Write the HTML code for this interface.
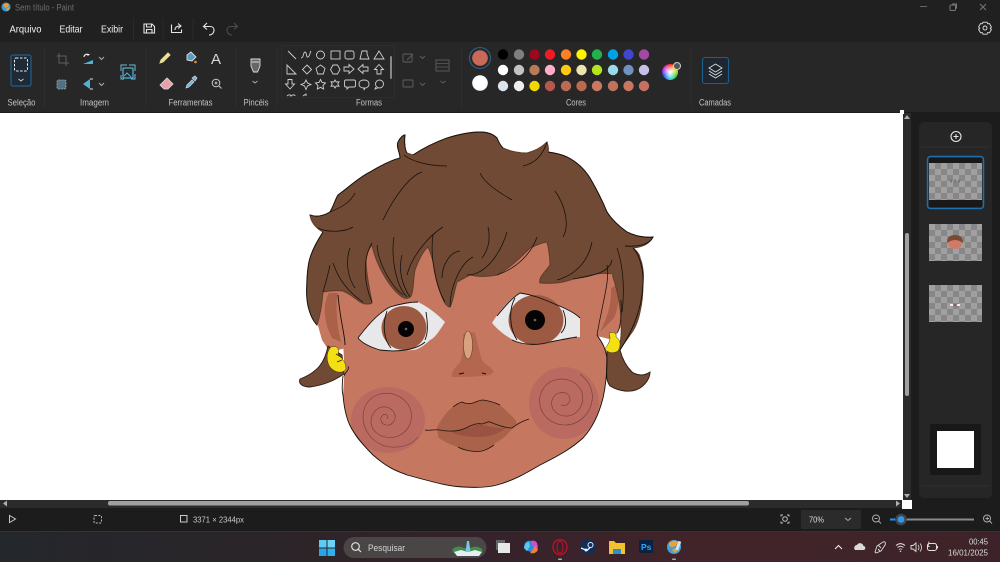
<!DOCTYPE html>
<html lang="pt"><head><meta charset="utf-8"><title>Sem título - Paint</title>
<style>
html,body{margin:0;padding:0;background:#202020}
body{width:1000px;height:562px;overflow:hidden;position:relative;font-family:"Liberation Sans",sans-serif}
svg{position:absolute;left:0;top:0;filter:blur(.3px)}
.chk{position:absolute;background:repeating-conic-gradient(#878787 0 25%,#a0a0a0 0 50%) 0 0/12px 12px}
</style></head><body>
<div style="position:absolute;left:0;top:0;width:1000px;height:42px;background:#202020"></div>
<div style="position:absolute;left:0;top:42px;width:1000px;height:70px;background:#272727"></div>
<div style="position:absolute;left:0;top:112px;width:1000px;height:397px;background:#1c1c1c"></div>
<div style="position:absolute;left:0;top:113px;width:904px;height:387px;background:#fff"></div>
<div style="position:absolute;left:0;top:509px;width:1000px;height:23px;background:#1c1c1c"></div>
<div style="position:absolute;left:0;top:532px;width:1000px;height:30px;background:linear-gradient(90deg,#24272c 0,#2a2528 25%,#33222a 45%,#41242a 70%,#3d2329 100%)"></div>
<div style="position:absolute;left:919px;top:122px;width:73px;height:376px;background:#262626;border-radius:5px"></div>
<div class="chk" style="left:929px;top:163px;width:53px;height:37px"></div>
<div class="chk" style="left:929px;top:224px;width:53px;height:37px"></div>
<div class="chk" style="left:929px;top:285px;width:53px;height:37px"></div>

<svg width="1000" height="562" viewBox="0 0 1000 562" font-family="Liberation Sans, sans-serif">
<!-- side panel -->
<circle cx="956" cy="136.500" r="5" fill="none" stroke="#e8e8e8" stroke-width="1.100"/>
<path d="M953.500 136.500h5M956 134v5" stroke="#e8e8e8"/>
<path d="M921 147h69M921 486h69" stroke="#303030"/>
<rect x="927.500" y="156.500" width="56" height="52" rx="3" fill="none" stroke="#1f6fb0" stroke-width="1.500"/>
<rect x="929" y="158" width="53" height="5" fill="#181818"/><rect x="929" y="200" width="53" height="7" fill="#1a1818"/>
<rect x="930" y="424" width="51" height="51" rx="2" fill="#181818"/><rect x="937" y="431" width="37" height="37" fill="#fff"/>
<path d="M950 181h12" stroke="#777" stroke-width="3" stroke-dasharray="2 2"/>
<ellipse cx="955" cy="243" rx="7" ry="6" fill="#d27a68"/><path d="M947 243q0-8 8-8t8 8q-4-3-8-3t-8 3z" fill="#7a4a33"/>
<rect x="950" y="304" width="3" height="2" fill="#eee"/><rect x="957" y="304" width="3" height="2" fill="#eee"/><rect x="954" y="304" width="2" height="2" fill="#a5563f"/>

<!-- scrollbars -->
<rect x="903" y="113" width="8" height="387" fill="#2b2b2b"/>
<rect x="905" y="233" width="4" height="163" fill="#a0a0a0" rx="2"/>
<path d="M907 115l3 4h-6zM907 498l3-4h-6z" fill="#b0b0b0"/>
<rect x="0" y="500" width="904" height="8" fill="#2b2b2b"/>
<rect x="108" y="501" width="641" height="4.500" fill="#a0a0a0" rx="2"/>
<path d="M3 503.500l4-3v6zM900 503.500l-4-3v6z" fill="#b0b0b0"/>
<rect x="902" y="500" width="10" height="9" fill="#fff"/><rect x="900" y="110" width="4" height="4" fill="#fff"/>

<!-- DRAWING: skin -->
<path d="M338 270C340 340 347 345 343 395C345 420 350 432 373 455C390 470 400 472 407 475C430 481 445 486 463 487C480 488 490 487 497 485C515 480 528 472 540 465C560 455 572 448 583 438C595 425 600 410 603 398C606 385 607 372 607 358C605 345 600 340 597 335L612 260L480 190L350 240Z" fill="#c6775f"/>
<!-- ears -->
<path d="M323 290L340 290L346 348L330 352L322 340L317 322Z" fill="#c6775f"/>
<path d="M608 272L622 285L622 325L613 340L597 336Z" fill="#c6775f"/>
<path d="M329 293C322 305 324 322 332 338L341 342C337 325 335 305 338 293ZM611 288C612 305 606 320 600 332L614 318C618 310 620 295 617 285Z" fill="#ab6049"/>
<!-- lower hair locks -->
<path d="M328 346C325 362 318 372 300 379C298 384 303 387 310 387C325 385 335 380 344 374L342 355Z" fill="#704a34" stroke="#2a1b13" stroke-width=".9"/>
<path d="M607 350C607 370 605 380 610 386C620 392 632 393 640 388C646 384 650 378 650 372C644 376 638 376 632 372C626 366 622 358 620 350Z" fill="#704a34" stroke="#2a1b13" stroke-width=".9"/>
<!-- cheeks -->
<ellipse cx="388" cy="420" rx="37" ry="33" fill="#ba6a60"/>
<ellipse cx="564" cy="403" rx="35" ry="36" fill="#ba6a60"/>
<g fill="none" stroke="#703c35" stroke-width=".6">
<path d="M387 419c3-3-2-6-4-4-4 3-2 9 3 10 6 1 10-5 9-10-2-7-10-10-16-7-8 4-10 14-6 21 5 8 18 11 27 6 10-5 14-17 10-27-5-11-18-17-30-14-11 3-17 12-17 23 0 13 9 25 22 29 13 3 26 0 33-9"/>
<path d="M561 405c5 2 9-2 9-6 0-5-6-8-11-6-7 2-9 10-6 16 4 7 14 9 21 5 8-5 11-15 7-24-5-9-16-13-26-10-11 3-17 14-15 25 2 12 13 20 25 20 14 0 25-11 27-24 2-11-4-21-12-27"/>
</g>
<!-- face outline -->
<path d="M338 295C340 320 345 335 345 345M343 376C342 385 342 392 343 395C345 420 350 432 373 455C390 470 400 472 407 475C430 481 445 486 463 487C480 488 490 487 497 485C515 480 528 472 540 465C560 455 572 448 583 438C595 425 600 410 603 398C606 385 607 372 607 358C605 345 600 340 597 335" fill="none" stroke="#15100d" stroke-width=".9"/>
<!-- eyes -->
<path d="M358 338C370 322 380 312 390 307C400 304 410 302 418 302C430 308 438 315 445 322C440 330 435 338 430 340C425 345 418 350 413 350C400 351 390 351 380 350C370 347 362 343 358 338Z" fill="#e8e8ea"/>
<ellipse cx="404" cy="328" rx="22.500" ry="22" fill="#9d5a42"/>
<circle cx="406" cy="329" r="8" fill="#050303"/><circle cx="406" cy="329" r="1.300" fill="#666"/>
<path d="M358 338C370 322 380 312 390 307C400 304 410 302 418 302M358 338C362 343 370 347 380 350C395 352 415 351 425 342M387 311C382 325 384 340 391 348M426 312C428 325 428 333 425 340" fill="none" stroke="#15100d" stroke-width=".9"/>
<path d="M492 323C500 310 510 298 520 293C535 295 545 300 557 305C567 309 575 313 580 318L580 337C570 338 560 340 543 344C530 345 520 343 517 342C505 336 498 330 492 323Z" fill="#e8e8ea"/>
<ellipse cx="536" cy="320" rx="27.500" ry="25" fill="#9d5a42"/>
<circle cx="535" cy="320" r="10" fill="#050303"/><circle cx="535" cy="320" r="1.300" fill="#666"/>
<path d="M497 316C505 306 512 298 520 293C535 295 545 300 557 305C567 309 575 313 580 318M512 340C525 346 540 345 550 342C560 340 570 338 577 337M515 298C508 310 510 330 517 340M563 310C567 320 566 328 561 333" fill="none" stroke="#15100d" stroke-width=".9"/>
<!-- nose -->
<path d="M463 335C465 332 472 331 475 333C478 345 480 355 483 362C488 366 492 368 494 372L490 375C478 377 462 377 452 377C451 372 456 366 460 363C463 355 463 345 463 335Z" fill="#b4664e"/>
<ellipse cx="468" cy="345" rx="4.500" ry="14" fill="#d8a27f" stroke="#6a4631" stroke-width=".6"/>
<path d="M459 374l5-1M482 373l4 1" stroke="#15100d" stroke-width="1" fill="none"/>
<!-- lips -->
<path d="M437 427C442 418 448 410 453 407C458 403 462 402 462 402C466 404 470 404 473 403C478 401 480 400 483 400C490 401 496 403 500 405C508 412 514 418 517 422C510 432 505 438 497 442C490 447 484 451 477 451C470 451 465 450 460 448C450 444 442 441 438 437Z" fill="#aa624b"/>
<path d="M450 431C460 432 470 428 478 424C490 427 498 428 506 428C498 434 490 437 478 437C465 437 456 435 450 431Z" fill="#9a5342"/>
<path d="M425 430C430 431 435 429 440 430C450 432 460 432 470 426C475 424 478 423 482 424C486 423 488 421 490 422C497 425 505 428 512 428C516 425 520 422 529 419M458 447C465 451 478 453 485 450C488 449 491 447 494 445M453 407C458 403 462 402 462 402C466 404 470 404 473 403C478 401 480 400 483 400C490 401 496 403 500 405" fill="none" stroke="#20120d" stroke-width=".8"/>
<!-- hair -->
<path d="M310 215C318 218 325 215 330 212C334 205 335 200 338 195C348 188 358 178 370 172C380 166 392 160 400 158C400 152 396 147 398 142C400 138 403 135 405 135C404 142 405 150 407 153L413 155C425 147 436 142 447 138C460 134 470 132 480 132C488 132 493 134 497 138C499 143 501 146 503 148C512 152 520 153 527 153C535 151 542 147 547 142C548 145 549 149 548 152C555 153 561 154 567 157C577 162 585 170 590 178C597 190 602 200 607 212C612 220 620 227 627 232C635 236 645 238 653 237C650 243 643 247 633 248C637 251 640 255 640 258C643 265 644 275 643 282C643 295 642 304 640 312C638 322 634 330 630 335C627 340 623 344 620 350L620 345C623 325 621 300 612 274C600 272 590 275 573 279C565 282 557 284 540 283C538 278 545 272 550 265C550 258 549 250 547 242C540 243 535 246 530 248C520 258 510 268 497 275C485 277 478 277 470 275C465 278 460 280 457 282C454 292 453 302 450 307C445 307 441 296 437 282C435 270 433 258 428 247C422 252 418 262 415 270C413 280 414 290 411 296C408 299 405 299 402 297C395 292 387 282 380 268C375 258 373 250 372 245C368 250 366 255 366 260C366 275 370 290 372 303C368 305 364 304 360 302C352 296 348 293 343 291C335 290 328 291 323 292C322 305 320 316 317 325C313 320 311 316 310 312C307 303 306 295 307 285C307 275 308 266 310 258C313 248 318 240 323 232C316 228 311 222 310 215Z" fill="#704a34" stroke="#5e3d2b" stroke-width="1"/>
<path d="M310 215C318 218 325 215 330 212C334 205 335 200 338 195C348 188 358 178 370 172C380 166 392 160 400 158C400 152 396 147 398 142C400 138 403 135 405 135C404 142 405 150 407 153M413 155C425 147 436 142 447 138C460 134 470 132 480 132C488 132 493 134 497 138C499 143 501 146 503 148M548 152C555 153 561 154 567 157C577 162 585 170 590 178C597 190 602 200 607 212C612 220 620 227 627 232C635 236 645 238 653 237C650 243 643 247 625 246" fill="none" stroke="#15100d" stroke-width=".9"/>
<path d="M310 258C313 248 318 240 323 232M310 258C307 266 306 290 307 300C308 310 312 320 317 325M633 248C640 255 644 272 643 285C642 305 636 326 620 350" fill="none" stroke="#15100d" stroke-width=".9"/>
<g fill="none" stroke="#15100d" stroke-width=".75">
<path d="M404 155C410 160 425 166 447 166M523 166C532 164 542 158 547 142M318 228C328 233 345 232 353 227M330 212C340 208 350 203 355 193"/>
<path d="M422 172C410 176 395 195 383 220M480 173C484 182 495 190 512 200M555 191C565 205 570 225 563 237"/>
<path d="M330 265C328 275 325 285 323 292M333 263C338 278 348 292 363 302M350 248C345 262 348 278 355 288M372 243C363 258 363 282 372 302"/>
<path d="M377 245C378 262 390 285 403 295M394 237C391 255 395 285 407 297M402 255C398 270 402 285 410 297M443 227C430 235 412 255 407 275"/>
<path d="M433 235C430 255 435 285 445 302M460 251C450 252 442 265 442 278M473 257C462 262 450 285 450 307"/>
<path d="M467 275C485 275 500 255 507 232M488 227C491 240 488 250 482 258M537 237C532 252 518 268 497 275M592 242C588 262 575 275 557 280M612 260C610 270 600 275 573 279"/>
<path d="M617 248C623 265 625 290 622 312M607 265C610 280 603 300 597 335"/>
</g>
<path d="M621 300C622 315 620 330 617 333" fill="none" stroke="#15100d" stroke-width=".8"/>
<!-- earrings -->
<path d="M331 347C337 345 340 349 338 354C341 358 346 361 346 369C343 374 335 373 330 367C326 361 326 352 331 347Z" fill="#f2e012" stroke="#3a3010" stroke-width=".5"/>
<path d="M609 333C613 331 617 333 616 337C621 340 621 346 618 351C613 354 608 353 605 349C607 345 612 341 609 333Z" fill="#f2e012" stroke="#3a3010" stroke-width=".5"/>
<path d="M336 354l5 3M342 360l-5 2" stroke="#2a2208" stroke-width=".8"/>
<path d="M348 366C350 370 345 372 344 376" stroke="#15100d" stroke-width=".8" fill="none"/>

<!-- title bar -->
<circle cx="6" cy="7" r="4.500" fill="#3d9bd8"/><path d="M3 5q3-3 6-1l-1 3-3 1zM6 9l3-2 1 2-3 2z" fill="#e0a040"/>
<text x="15" y="10.500" font-size="9" fill="#6e6e6e" textLength="59" lengthAdjust="spacingAndGlyphs">Sem título - Paint</text>
<path d="M920 6.500h7" stroke="#666"/><rect x="950" y="5" width="5.500" height="5.500" rx="1" fill="none" stroke="#777"/><path d="M952 4h4.500v4.500" fill="none" stroke="#777"/>
<path d="M980 4l6 6m0-6l-6 6" stroke="#777"/>
<!-- menu -->
<g fill="#efefef" font-size="10.300">
<text x="9.500" y="32.500" textLength="32" lengthAdjust="spacingAndGlyphs">Arquivo</text><text x="59.500" y="32.500" textLength="23" lengthAdjust="spacingAndGlyphs">Editar</text><text x="101" y="32.500" textLength="22" lengthAdjust="spacingAndGlyphs">Exibir</text></g>
<path d="M133.500 18v22M163 18v22M193 18v22" stroke="#2a2a2a"/>
<g fill="none" stroke="#e4e4e4" stroke-width="1.100">
<path d="M144 24h8l2.500 2.500V33h-10.500z"/><path d="M146.500 24v3h5v-3M146.500 33v-3.500h5.500V33"/>
<path d="M172 25h-.500v7.500h10v-3" /><path d="M175 30c0-3 2-4 5-4m-2-2.500l3 2.500-3 2.500"/>
<path d="M204 26.500h6c3 0 4 2 4 3.500 0 3-2 5-5 5M207 23l-3.500 3.500 3.500 3"/>
</g>
<path d="M237 26.500h-6c-3 0-4 2-4 3.500 0 3 2 5 5 5M234 23l3.500 3.500-3.500 3" fill="none" stroke="#4d4d4d" stroke-width="1.100"/>
<g fill="none" stroke="#e4e4e4" stroke-width=".9">
<circle cx="985" cy="28" r="2"/><path d="M983 23.200h4l.7 1.600 1.800-.2 1.900 3.400-1.100 1.200 1.100 1.200-1.900 3.400-1.800-.2-.7 1.600h-4l-.7-1.600-1.800.2-1.900-3.400 1.100-1.200-1.100-1.200 1.900-3.400 1.800.2z" transform="translate(0 -1)"/></g>
<!-- ribbon separators -->
<path d="M44.500 46v62M146 46v62M236 46v62M277 46v62M461.500 46v62M691 46v62" stroke="#2e2e2e"/>
<!-- selection -->
<rect x="11" y="55" width="20" height="31" rx="2" fill="#1e2b36" stroke="#1d5f8c" stroke-width="1.200"/>
<rect x="14.500" y="58" width="13" height="13" rx="1.500" fill="none" stroke="#eee" stroke-dasharray="2.500 1.500"/>
<path d="M18.500 79l2.500 2 2.500-2" fill="none" stroke="#ccc"/>
<!-- image -->
<g fill="none" stroke="#5f5f5f" stroke-width="1"><path d="M59 53v10h10M56.500 56h9.500v10"/></g>
<path d="M84 55a3 3 0 0 1 5-2m0 0v-1m0 1h-2" fill="none" stroke="#eee" stroke-width="1.100" transform="translate(0 2)"/><path d="M83 64l10-4v4z" fill="#4fb3d9"/>
<path d="M99 57l2.500 2.500L104 57M99 83l2.500 2.500L104 83" fill="none" stroke="#aaa"/>
<rect x="57" y="80" width="9" height="9" rx="1.500" fill="#4f7085" stroke="#aaa" stroke-width=".8" stroke-dasharray="2 1"/>
<path d="M83 84l7-5v10z" fill="#4fb3d9"/><path d="M90 79h3M90 89h3" stroke="#ddd"/>
<g fill="none"><rect x="123" y="68" width="10" height="10" rx="1" stroke="#4fb3d9" stroke-width="1.200"/><path d="M121 71v-6h6M129 65h6v6M135 74v5h-4M121 75v4h3" stroke="#6fb8d8" stroke-width="1"/><path d="M124 76l3-3 4 4" stroke="#4fb3d9"/></g>
<!-- tools -->
<path d="M160 63l1-3 7-7 2 2-7 7z" fill="#eadf9c" stroke="#eadf9c"/>
<path d="M187 55l4-3 5 5-4 4-5-1z" fill="#5c9cc0" stroke="#ddd" stroke-width=".9"/><circle cx="195.500" cy="62" r="1.300" fill="#e88f2a"/>
<text x="211" y="64" font-size="15" fill="#d8d8d8">A</text>
<path d="M160 85l7-7 6 6-5 5h-4z" fill="#eaa0a6" stroke="#ddd" stroke-width=".8"/>
<path d="M186 88l1-3 5-5 2 2-5 5zM192 78l3-2 2 2-2 3z" fill="#6fb4d8" stroke="#ddd" stroke-width=".7"/>
<circle cx="216" cy="83" r="3.800" fill="none" stroke="#ccc"/><path d="M219 86l2.500 2.500M214.500 83h3M216 81.500v3" stroke="#ccc"/>
<!-- brush -->
<path d="M251 59h9v7l-2.500 6h-4l-2.500-6z" fill="#666" stroke="#ddd" stroke-width=".9"/><path d="M252 62h7" stroke="#ddd"/>
<path d="M252.500 81l2.500 2 2.500-2" fill="none" stroke="#aaa"/>
<!-- shapes -->
<rect x="281.500" y="45.500" width="113" height="52" fill="none" stroke="#2d2d2d"/>
<rect x="390" y="56" width="2" height="23" fill="#888" rx="1"/>
<g fill="none" stroke="#cfcfcf" stroke-width=".9">
<path d="M288 51l8 8"/><path d="M301 58c3 0 2-6 4-6s1 6 3 5 2-5 3-6"/><circle cx="320.500" cy="55" r="4"/><rect x="331" y="51" width="9" height="8"/><rect x="345" y="51" width="9" height="8" rx="2"/><path d="M360 59l2-8h5v3l2 5z"/><path d="M379 51l5 8h-10z"/>
<path d="M287 65v9h9z"/><path d="M307 65l4.500 4.500-4.500 4.500-4.500-4.500z"/><path d="M320.500 65l4.500 3.300-1.700 5.700h-5.600l-1.700-5.700z"/><path d="M333 65h4.500l2.500 4.500-2.500 4.500H333l-2.500-4.500z"/><path d="M344 67h5v-2.500l5 4.500-5 4.500V71h-5z"/><path d="M368 67h-5v-2.500l-5 4.500 5 4.500V71h5z"/><path d="M379 64.500l4.500 5h-2.500v4.500h-4v-4.500h-2.500z"/>
<path d="M290 89l-4.500-5h2.500v-4.500h4V84h2.500z"/><path d="M306 80l1.500 3 3.500 1.500-3.500 1.500-1.500 3.500-1.500-3.500-3.500-1.500 3.500-1.500z"/><path d="M320.500 79.500l1.500 3 3.500.5-2.500 2.500.6 3.500-3.100-1.700-3.100 1.700.6-3.500-2.500-2.500 3.500-.5z"/><path d="M335 80l1.200 2 2.800-.2-1.200 2.200 1.200 2.200-2.800-.2-1.200 2-1.200-2-2.800.2 1.200-2.200-1.200-2.200 2.800.2z"/><path d="M346 80h8a1.500 1.500 0 0 1 1.500 1.500v4a1.500 1.500 0 0 1-1.500 1.500h-5l-2 2v-2h-1a1.500 1.500 0 0 1-1.500-1.500v-4A1.500 1.500 0 0 1 346 80z"/><path d="M364 88c-3 0-5-1.500-5-4s2-4 5-4 5 1.500 5 4-2 4-4 4l-1 2z"/><circle cx="379.500" cy="84" r="4"/><path d="M376 87l-1 2 2.500-.7"/>
<path d="M287 96c2-2 4-1 4 0 2-2 4-1 4 0M303 96l3-2v2"/>
</g>
<!-- outline/fill -->
<g fill="none" stroke="#606060" stroke-width=".9"><rect x="403" y="54" width="9" height="8" rx="1"/><path d="M407 60l6-6M420 56l2.500 2.500L425 56"/><rect x="403" y="80" width="10" height="7" rx="1"/><path d="M420 83l2.500 2.500L425 83"/><rect x="436" y="60" width="13" height="11"/><path d="M436 63.500h13M436 67h13" stroke="#4f4f4f"/><path d="M440.500 81l2.500 2 2.500-2"/></g>
<!-- colors -->
<circle cx="480" cy="58" r="10.500" fill="none" stroke="#2a5a80" stroke-width="1.300"/><circle cx="480" cy="58" r="7.800" fill="#c9695a"/>
<circle cx="480" cy="83" r="7.800" fill="#fff"/>
<g>
<circle cx="503" cy="54.500" r="5.200" fill="#000"/><circle cx="519" cy="54.500" r="5.200" fill="#7f7f7f"/><circle cx="534.500" cy="54.500" r="5.200" fill="#a0061c"/><circle cx="550" cy="54.500" r="5.200" fill="#ed1c24"/><circle cx="566" cy="54.500" r="5.200" fill="#ff7f27"/><circle cx="581.500" cy="54.500" r="5.200" fill="#fff200"/><circle cx="597" cy="54.500" r="5.200" fill="#22b14c"/><circle cx="613" cy="54.500" r="5.200" fill="#00a2e8"/><circle cx="628.500" cy="54.500" r="5.200" fill="#3f48cc"/><circle cx="644" cy="54.500" r="5.200" fill="#a349a4"/>
<circle cx="503" cy="70" r="5.200" fill="#fff"/><circle cx="519" cy="70" r="5.200" fill="#c3c3c3"/><circle cx="534.500" cy="70" r="5.200" fill="#b97a57"/><circle cx="550" cy="70" r="5.200" fill="#ffaec9"/><circle cx="566" cy="70" r="5.200" fill="#ffc90e"/><circle cx="581.500" cy="70" r="5.200" fill="#efe4b0"/><circle cx="597" cy="70" r="5.200" fill="#b5e61d"/><circle cx="613" cy="70" r="5.200" fill="#99d9ea"/><circle cx="628.500" cy="70" r="5.200" fill="#7092be"/><circle cx="644" cy="70" r="5.200" fill="#c8bfe7"/>
<circle cx="503" cy="86" r="5.200" fill="#dde3ea"/><circle cx="519" cy="86" r="5.200" fill="#eeeeee"/><circle cx="534.500" cy="86" r="5.200" fill="#f0d800"/><circle cx="550" cy="86" r="5.200" fill="#b5574a"/><circle cx="566" cy="86" r="5.200" fill="#bd6a54"/><circle cx="581.500" cy="86" r="5.200" fill="#bb6a50"/><circle cx="597" cy="86" r="5.200" fill="#cb7860"/><circle cx="613" cy="86" r="5.200" fill="#c0725c"/><circle cx="628.500" cy="86" r="5.200" fill="#c8765f"/><circle cx="644" cy="86" r="5.200" fill="#c6715f"/>
</g>
<!-- layers -->
<rect x="702.500" y="57.500" width="26" height="26" rx="2.500" fill="#1e2730" stroke="#1d5f8c" stroke-width="1.100"/>
<g fill="none" stroke="#dcdcdc" stroke-width=".9"><path d="M715.500 64l6.500 4-6.500 4-6.500-4z"/><path d="M709 71l6.500 4 6.500-4M709 74l6.500 4 6.500-4"/></g>
<!-- ribbon labels -->
<g fill="#c2c2c2" font-size="9">
<text x="7.500" y="105.500" textLength="28" lengthAdjust="spacingAndGlyphs">Seleção</text><text x="80" y="105.500" textLength="29" lengthAdjust="spacingAndGlyphs">Imagem</text><text x="168.500" y="105.500" textLength="44" lengthAdjust="spacingAndGlyphs">Ferramentas</text><text x="243.500" y="105.500" textLength="25" lengthAdjust="spacingAndGlyphs">Pincéis</text><text x="356" y="105.500" textLength="26" lengthAdjust="spacingAndGlyphs">Formas</text><text x="566" y="105.500" textLength="20" lengthAdjust="spacingAndGlyphs">Cores</text><text x="699" y="105.500" textLength="32" lengthAdjust="spacingAndGlyphs">Camadas</text></g>
<!-- status -->
<path d="M9.500 515.500v7l6-3.500z" fill="none" stroke="#c8c8c8"/>
<rect x="94" y="515.500" width="7.500" height="7.500" rx="1" fill="none" stroke="#bbb" stroke-dasharray="2 1.300"/>
<rect x="180.500" y="515.500" width="6.500" height="6.500" fill="none" stroke="#ccc"/>
<text x="193" y="522.500" font-size="8.700" fill="#c8c8c8" textLength="51" lengthAdjust="spacingAndGlyphs">3371 × 2344px</text>
<g fill="none" stroke="#c0c0c0"><circle cx="785" cy="519" r="2.300"/><path d="M781 516.500v-1.500h2M787 515h2v1.500M789 521.500v1.500h-2M783 523h-2v-1.500"/></g>
<rect x="801" y="510" width="60" height="19" rx="2" fill="#2b2b2b"/>
<text x="809" y="522.500" font-size="8.700" fill="#dedede" textLength="15" lengthAdjust="spacingAndGlyphs">70%</text>
<path d="M845 518l3 2.500 3-2.500" fill="none" stroke="#aaa"/>
<circle cx="876" cy="518.500" r="3.500" fill="none" stroke="#aaa"/><path d="M878.500 521l2.500 2.500M874.500 518.500h3" stroke="#aaa"/>
<path d="M901 519.500h73" stroke="#8a8a8a" stroke-width="2"/><path d="M890 519.500h11" stroke="#2491ee" stroke-width="2"/>
<circle cx="901" cy="519.500" r="5.800" fill="#454545"/><circle cx="901" cy="519.500" r="3.400" fill="#2a9af0"/>
<circle cx="987" cy="518.500" r="3.500" fill="none" stroke="#aaa"/><path d="M989.500 521l2.500 2.500M985.500 518.500h3.500M987.200 516.800v3.500" stroke="#aaa"/>
<path d="M0 531.500h1000" stroke="#333"/>
<!-- taskbar -->
<rect x="319" y="540" width="7.500" height="7.500" fill="#5bcbf5"/><rect x="327.500" y="540" width="7.500" height="7.500" fill="#6bd2f7"/><rect x="319" y="548.500" width="7.500" height="7.500" fill="#27a5e8"/><rect x="327.500" y="548.500" width="7.500" height="7.500" fill="#2fb0ea"/>
<rect x="343.500" y="537" width="143" height="21" rx="10.500" fill="#4b4646"/>
<circle cx="355.500" cy="546.500" r="3.800" fill="none" stroke="#e6e6e6" stroke-width="1.100"/><path d="M358.300 549.300l2.700 2.700" stroke="#e6e6e6" stroke-width="1.100"/>
<text x="368" y="551" font-size="9.500" fill="#d4d4d4" textLength="37" lengthAdjust="spacingAndGlyphs">Pesquisar</text>
<path d="M452 550c3-4 8-4 12-2h6c4-2 9-2 13 2l-2 3h-27z" fill="#3d8f4a"/><path d="M454 552l7-2 7 2 7-2 7 2-3 4h-22z" fill="#e6eef2"/><path d="M467 541h2l1.500 11h-5z" fill="#7cc4ea"/>
<rect x="496" y="540" width="9" height="10" fill="#666"/><rect x="498" y="543" width="12" height="10" fill="#e8e8e8"/>
<path d="M525 543c2-3 6-3 7-1l3 6c1 3-2 5-4 4l-3-1c-3 0-5-4-3-8z" fill="#2a8ee0"/><path d="M531 541c2-1 5 0 6 2l1 4c-1 2-4 2-5 0z" fill="#d04fd0"/><path d="M530 553c3 1 7 0 8-4l-3-3c-1 2-3 5-5 7z" fill="#f08040"/><path d="M524 548c0-2 2-6 5-6l1 4-3 5z" fill="#5fc8e8"/>
<ellipse cx="560" cy="547" rx="7" ry="7.500" fill="none" stroke="#b0122a" stroke-width="1.500"/><ellipse cx="560" cy="547" rx="3" ry="6" fill="none" stroke="#b0122a" stroke-width="1.200"/>
<circle cx="588" cy="547" r="7.500" fill="#0e2f5a"/><circle cx="590.500" cy="545" r="2.500" fill="none" stroke="#eef" stroke-width="1"/><path d="M581 548l6 2.500 3-3" stroke="#eef" stroke-width="1.300" fill="none"/><circle cx="586" cy="550" r="1.500" fill="#eef"/>
<path d="M609 541h5l2 2h9v11h-16z" fill="#f2c230"/><rect x="613" y="549" width="8" height="5" fill="#2d8fd0"/>
<rect x="639" y="540" width="14" height="13" rx="1.500" fill="#0a2240"/><text x="641" y="550" font-size="8.500" font-weight="700" fill="#31a8ff">Ps</text>
<circle cx="674" cy="547" r="7" fill="#3ea6dc"/><path d="M669 543c3-3 7-3 9-1l-2 4-4 1-3-1zM672 550l4-2 2 2-3 3z" fill="#e6a23c"/><path d="M675 548l2-4 1 2zM670 549l2 2-3-1z" fill="#d84f4f"/>
<rect x="677" y="541" width="3" height="9" fill="#cfe6f0" transform="rotate(20 678 545)"/>
<rect x="558" y="558.500" width="4" height="1.500" fill="#aaa" rx=".7"/><rect x="672" y="558.500" width="4" height="1.500" fill="#aaa" rx=".7"/>
<path d="M835 549l3.500-3.500 3.500 3.500" fill="none" stroke="#eee" stroke-width="1.100"/>
<path d="M855 550h8a2 2 0 0 0 .5-4 3.500 3.500 0 0 0-6.500-1 3 3 0 0 0-2 5z" fill="#dadada"/>
<path d="M875 552l2-6 6-4c2-1 3 1 2 3l-4 6-5 2zm3-3l2 2M878 545l3 3" fill="none" stroke="#ddd" stroke-width=".9"/>
<path d="M896 545.500c3-2.500 6-2.500 9 0M897.500 547.500c2-1.700 4-1.700 6 0M899 549.500c.8-.7 2.200-.7 3 0" fill="none" stroke="#e0e0e0" stroke-width=".9"/><circle cx="900.500" cy="551.300" r=".7" fill="#e0e0e0"/>
<path d="M911 545.500v3.500h2l3 2.500v-8.500l-3 2.500z" fill="none" stroke="#ddd" stroke-width=".9"/><path d="M918 545c1.200 1.500 1.200 3.500 0 5M920 543.500c2 2.200 2 5.800 0 8" fill="none" stroke="#ddd" stroke-width=".8"/>
<rect x="927.500" y="543.500" width="9" height="7" rx="2" fill="none" stroke="#e0e0e0"/><path d="M937.500 546v2.500" stroke="#e0e0e0"/><path d="M929 541.500l-1 5h2" stroke="#e0e0e0" fill="none" stroke-width=".8"/>
<g fill="#dcdcdc" font-size="8.600"><text x="969" y="544.500" textLength="19" lengthAdjust="spacingAndGlyphs">00:45</text><text x="948" y="555.500" textLength="40" lengthAdjust="spacingAndGlyphs">16/01/2025</text></g>
</svg>
<div style="position:absolute;left:662px;top:63.500px;width:16px;height:16px;border-radius:50%;background:radial-gradient(circle,#fff 0,rgba(255,255,255,.75) 22%,rgba(255,255,255,0) 70%),conic-gradient(#ff2020,#ffd000,#30d030,#20d0e0,#2040f0,#c020e0,#ff2020)"></div>
<div style="position:absolute;left:673px;top:62px;width:6px;height:6px;border-radius:50%;background:#555;border:.7px solid #ccc"></div>
</body></html>
